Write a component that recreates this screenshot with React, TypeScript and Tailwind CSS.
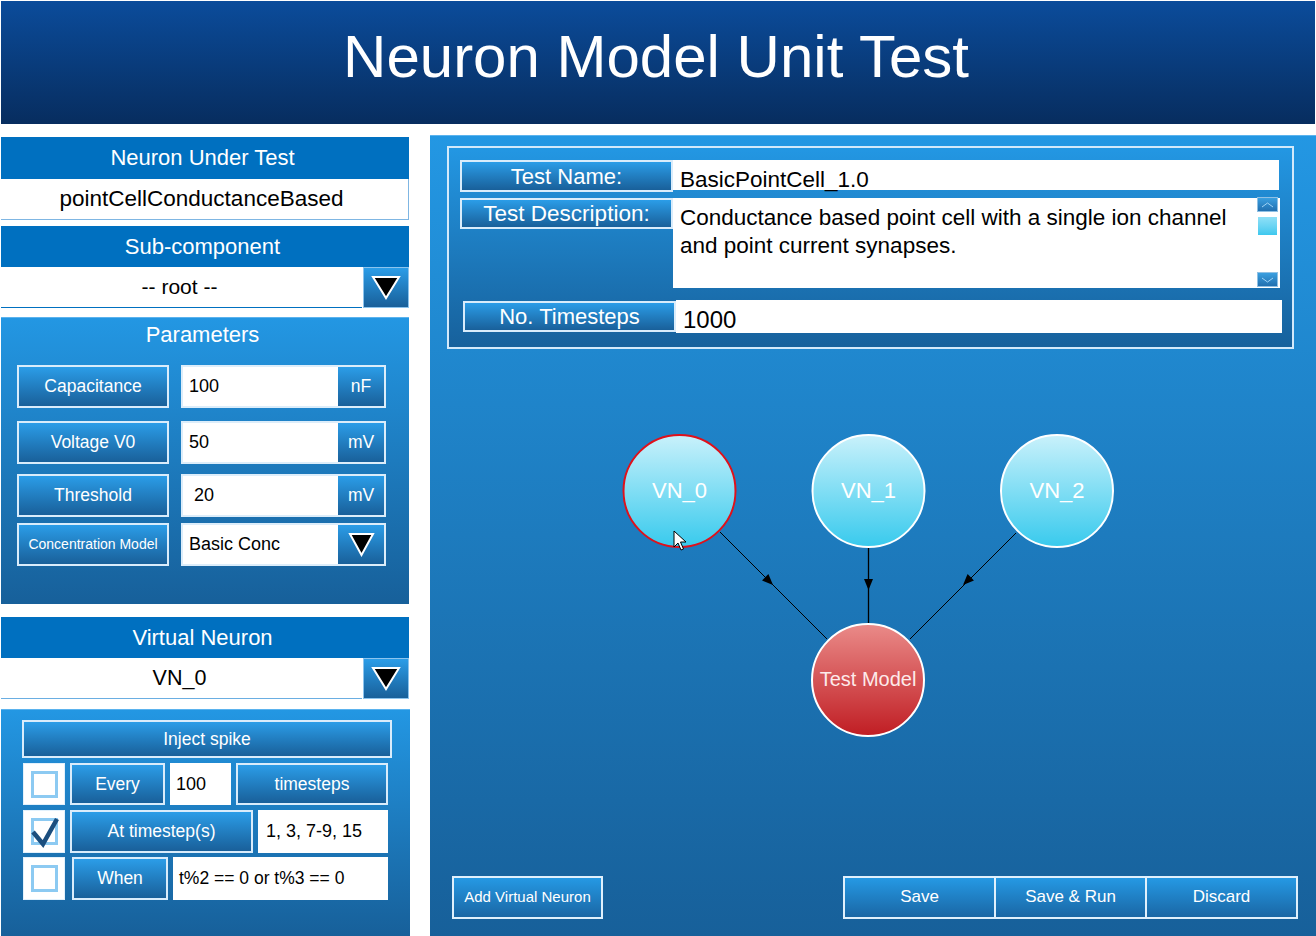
import React from "react";

const BTN =
  "border-2 border-[#d9ecfb] bg-linear-to-b from-[#2b9de8] to-[#19609a] text-white flex items-center justify-center";
const HEAD =
  "bg-[#0070c0] text-white text-[22px] flex items-center justify-center leading-none pr-[5px]";

function Tri({ w = 26, h = 22 }: { w?: number; h?: number }) {
  return (
    <svg width={w + 4} height={h + 4} viewBox={`0 0 ${w + 4} ${h + 4}`}>
      <polygon
        points={`2,2 ${w + 2},2 ${w / 2 + 2},${h + 2}`}
        fill="#000"
        stroke="#fff"
        strokeWidth="2"
      />
    </svg>
  );
}

function DropBtn() {
  return (
    <div className="w-[46px] h-full border border-[#8cc4ee] bg-linear-to-b from-[#2b9de8] to-[#19609a] flex items-center justify-center">
      <Tri w={26} h={21} />
    </div>
  );
}

function ParamRow({
  label,
  value,
  unit,
  small,
  drop,
  cls,
  vpad,
}: {
  label: string;
  value: string;
  unit?: string;
  small?: boolean;
  drop?: boolean;
  cls: string;
  vpad?: string;
}) {
  return (
    <div className={`flex h-[43px] ml-[16px] ${cls}`}>
      <div className={`${BTN} w-[152px] h-full ${small ? "text-[14px]" : "text-[17.5px]"}`}>
        {label}
      </div>
      <div className="ml-[12px] w-[205px] h-full flex border-2 border-[#dcedfa] bg-white">
        <div className={`flex-1 flex items-center text-[18px] text-black ${vpad ?? "pl-[6px]"}`}>
          {value}
        </div>
        <div className="w-[46px] h-full bg-linear-to-b from-[#2b9de8] to-[#19609a] text-white text-[17.5px] flex items-center justify-center">
          {drop ? <Tri w={23} h={21} /> : unit}
        </div>
      </div>
    </div>
  );
}

function Check({ checked }: { checked?: boolean }) {
  return (
    <div className="relative w-[42px] h-full bg-white border border-[#e2f1fc] flex items-center justify-center">
      <div className="w-[27px] h-[27px] border-[3px] border-[#8ccaf2] bg-white" />
      {checked && (
        <svg className="absolute left-0 top-0" width="42" height="43" viewBox="0 0 42 43">
          <path d="M9 21 L19 33 L33 8" fill="none" stroke="#1b4e7e" strokeWidth="4.5" />
        </svg>
      )}
    </div>
  );
}

function arrow(tx: number, ty: number, dx: number, dy: number) {
  const len = Math.hypot(dx, dy);
  const ux = dx / len;
  const uy = dy / len;
  const L = 11;
  const W = 4.5;
  const bx = tx - ux * L;
  const by = ty - uy * L;
  const px = -uy * W;
  const py = ux * W;
  return `${tx},${ty} ${bx + px},${by + py} ${bx - px},${by - py}`;
}

function Diagram() {
  const vn = [
    { x: 249.5, y: 355, t: "VN_0", sel: true },
    { x: 438.5, y: 355, t: "VN_1" },
    { x: 627, y: 355, t: "VN_2" },
  ];
  const f = "'Liberation Sans', Arial, sans-serif";
  return (
    <svg
      className="absolute left-0 top-0 pointer-events-none"
      width="886"
      height="801"
      viewBox="0 0 886 801"
    >
      <defs>
        <linearGradient id="gvn" x1="0" y1="0" x2="0" y2="1">
          <stop offset="0" stopColor="#c9f1fb" />
          <stop offset="1" stopColor="#38caed" />
        </linearGradient>
        <linearGradient id="gtm" x1="0" y1="0" x2="0" y2="1">
          <stop offset="0" stopColor="#ea8b89" />
          <stop offset="1" stopColor="#c01d23" />
        </linearGradient>
      </defs>
      <line x1="290" y1="396" x2="397" y2="503" stroke="#000" strokeWidth="1" />
      <line x1="438.5" y1="411" x2="438.5" y2="487" stroke="#000" strokeWidth="1.3" />
      <line x1="586" y1="397" x2="480" y2="503" stroke="#000" strokeWidth="1" />
      <polygon points={arrow(343, 449, 107, 107)} fill="#000" />
      <polygon points={arrow(438.5, 454, 0, 1)} fill="#000" />
      <polygon points={arrow(533, 449, -106, 106)} fill="#000" />
      {vn.map((n) => (
        <g key={n.t}>
          <circle
            cx={n.x}
            cy={n.y}
            r="56"
            fill="url(#gvn)"
            stroke={n.sel ? "#e0101a" : "#ffffff"}
            strokeWidth="2"
          />
          <text
            x={n.x}
            y={n.y + 7}
            textAnchor="middle"
            fill="#ffffff"
            fontSize="22"
            fontFamily={f}
          >
            {n.t}
          </text>
        </g>
      ))}
      <circle cx="438" cy="544" r="56" fill="url(#gtm)" stroke="#ffffff" strokeWidth="2" />
      <text x="438" y="550" textAnchor="middle" fill="#fdeaea" fontSize="20" fontFamily={f}>
        Test Model
      </text>
      <path
        d="M244 395 L244 411 L248 407 L251 414 L253.5 413 L250.5 406 L256 406 Z"
        fill="#ffffff"
        stroke="#000"
        strokeWidth="1"
        strokeLinejoin="round"
      />
    </svg>
  );
}

function ScrollBtn({ up }: { up?: boolean }) {
  return (
    <div className="w-[21px] h-[15px] border border-[#8fc0e4] bg-linear-to-b from-[#3a9fe0] to-[#2270b0] flex items-center justify-center">
      <svg width="13" height="6" viewBox="0 0 13 6">
        <path
          d={up ? "M1 5 L6.5 1 L12 5" : "M1 1 L6.5 5 L12 1"}
          fill="none"
          stroke="#9fd2f5"
          strokeWidth="1"
        />
      </svg>
    </div>
  );
}

export default function App() {
  return (
    <div className="w-[1316px] h-[936px] bg-white overflow-hidden font-['Liberation_Sans',Arial,sans-serif] flex flex-col">
      {/* Title bar */}
      <div className="ml-[1px] mt-[1px] w-[1314px] h-[123px] shrink-0 bg-linear-to-b from-[#0b4c9b] to-[#072d5f] flex items-center justify-center pb-[11px] pr-[4px]">
        <h1 className="text-white text-[60px] leading-none font-normal">Neuron Model Unit Test</h1>
      </div>

      <div className="flex flex-1">
        {/* Left column */}
        <div className="ml-[1px] w-[408px] flex flex-col pt-[13px]">
          <div className={`${HEAD} h-[42px]`}>Neuron Under Test</div>
          <div className="h-[41px] bg-white border-r border-b border-[#7fb6e3] flex items-center justify-center pr-[6px] text-[22.5px] text-black">
            pointCellConductanceBased
          </div>

          <div className={`${HEAD} h-[41px] mt-[6px]`}>Sub-component</div>
          <div className="h-[41px] flex gap-[1px]">
            <div className="flex-1 bg-white border-b border-[#0070c0] flex items-center justify-center pr-[4px] text-[21px] text-black">
              -- root --
            </div>
            <DropBtn />
          </div>

          {/* Parameters */}
          <div className="mt-[9px] h-[287px] w-[408px] bg-linear-to-b from-[#2397e3] to-[#17609a] border-t border-[#5bb3ee] flex flex-col">
            <div className="h-[47px] pt-[5px] pr-[5px] text-white text-[22px] leading-[24px] text-center">Parameters</div>
            <ParamRow label="Capacitance" value="100" unit="nF" cls="" />
            <ParamRow label="Voltage V0" value="50" unit="mV" cls="mt-[13px]" />
            <ParamRow label="Threshold" value="20" unit="mV" cls="mt-[10px]" vpad="pl-[11px]" />
            <ParamRow label="Concentration Model" value="Basic Conc" small drop cls="mt-[6px]" />
          </div>

          <div className={`${HEAD} h-[41px] mt-[13px]`}>Virtual Neuron</div>
          <div className="h-[41px] flex gap-[1px]">
            <div className="flex-1 bg-white border-b border-[#6aaee2] flex items-center justify-center pr-[4px] text-[21.5px] text-black">
              VN_0
            </div>
            <DropBtn />
          </div>

          {/* Inject spike panel */}
          <div className="mt-[10px] flex-1 w-[409px] bg-linear-to-b from-[#2397e3] to-[#17609a] border-t border-[#5bb3ee] flex flex-col">
            <div className={`${BTN} ml-[21px] mt-[10px] w-[370px] h-[38px] text-[17.5px]`}>Inject spike</div>

            <div className="flex ml-[22px] mt-[5px] h-[42px] gap-[5px]">
              <Check />
              <div className={`${BTN} w-[95px] text-[17.5px]`}>Every</div>
              <div className="w-[61px] bg-white flex items-center pl-[6px] text-[18px] text-black">100</div>
              <div className={`${BTN} w-[152px] text-[17.5px]`}>timesteps</div>
            </div>

            <div className="flex ml-[22px] mt-[5px] h-[43px] gap-[5px]">
              <Check checked />
              <div className={`${BTN} w-[183px] text-[17.5px]`}>At timestep(s)</div>
              <div className="w-[130px] bg-white flex items-center pl-[8px] text-[18px] text-black">1, 3, 7-9, 15</div>
            </div>

            <div className="flex ml-[22px] mt-[4px] h-[43px]">
              <Check />
              <div className={`${BTN} ml-[7px] w-[96px] text-[17.5px]`}>When</div>
              <div className="ml-[5px] w-[215px] bg-white flex items-center pl-[6px] text-[17.5px] text-black">
                t%2 == 0 or t%3 == 0
              </div>
            </div>
          </div>
        </div>

        {/* Right panel */}
        <div className="relative ml-[21px] mt-[11px] w-[886px] h-[801px] bg-linear-to-b from-[#2397e3] to-[#17609a] border-t border-[#5bb3ee] flex flex-col">
          <div className="ml-[17px] mt-[10px] w-[847px] h-[203px] border-2 border-[#d3e9fa] bg-linear-to-b from-[#2397e3] to-[#17619c] flex flex-col">
            <div className="flex items-start ml-[11px] mt-[12px] h-[32px]">
              <div className={`${BTN} w-[213px] h-[32px] text-[22px]`}>Test Name:</div>
              <div className="w-[606px] h-[30px] bg-white flex items-center pl-[7px] pt-[9px] text-[22.5px] text-black">
                BasicPointCell_1.0
              </div>
            </div>
            <div className="flex items-start ml-[11px] mt-[6px]">
              <div className={`${BTN} w-[213px] h-[31px] text-[22.5px]`}>Test Description:</div>
              <div className="relative w-[607px] h-[90px] bg-white pl-[7px] pt-[6px] text-[22.5px] leading-[28px] text-black">
                Conductance based point cell with a single ion channel
                <br />
                and point current synapses.
                <div className="absolute left-[584px] top-[-1px]">
                  <ScrollBtn up />
                </div>
                <div className="absolute left-[585px] top-[19px] w-[19px] h-[18px] bg-linear-to-b from-[#8ee0f7] to-[#3cc8ee]" />
                <div className="absolute left-[584px] top-[74px]">
                  <ScrollBtn />
                </div>
              </div>
            </div>
            <div className="flex items-center ml-[14px] mt-[12px] h-[33px]">
              <div className={`${BTN} w-[213px] h-[31px] text-[22px]`}>No. Timesteps</div>
              <div className="w-[606px] h-[33px] bg-white flex items-center pl-[7px] pt-[6px] text-[24px] text-black">
                1000
              </div>
            </div>
          </div>

          <Diagram />

          <div className="mt-auto mb-[17px] ml-[22px] mr-[18px] h-[43px] flex justify-between">
            <div className="w-[151px] h-full border-2 border-[#e0f0fc] bg-linear-to-b from-[#2599e4] to-[#1a67a5] text-white text-[15px] flex items-center justify-center">
              Add Virtual Neuron
            </div>
            <div className="w-[455px] h-full border-2 border-[#e0f0fc] flex">
              <div className="flex-1 bg-linear-to-b from-[#2599e4] to-[#1a67a5] text-white text-[17px] flex items-center justify-center pb-[1px]">
                Save
              </div>
              <div className="flex-1 border-l-2 border-[#e0f0fc] bg-linear-to-b from-[#2599e4] to-[#1a67a5] text-white text-[17px] flex items-center justify-center pb-[1px]">
                Save &amp; Run
              </div>
              <div className="flex-1 border-l-2 border-[#e0f0fc] bg-linear-to-b from-[#2599e4] to-[#1a67a5] text-white text-[17px] flex items-center justify-center pb-[1px]">
                Discard
              </div>
            </div>
          </div>
        </div>
      </div>
    </div>
  );
}
